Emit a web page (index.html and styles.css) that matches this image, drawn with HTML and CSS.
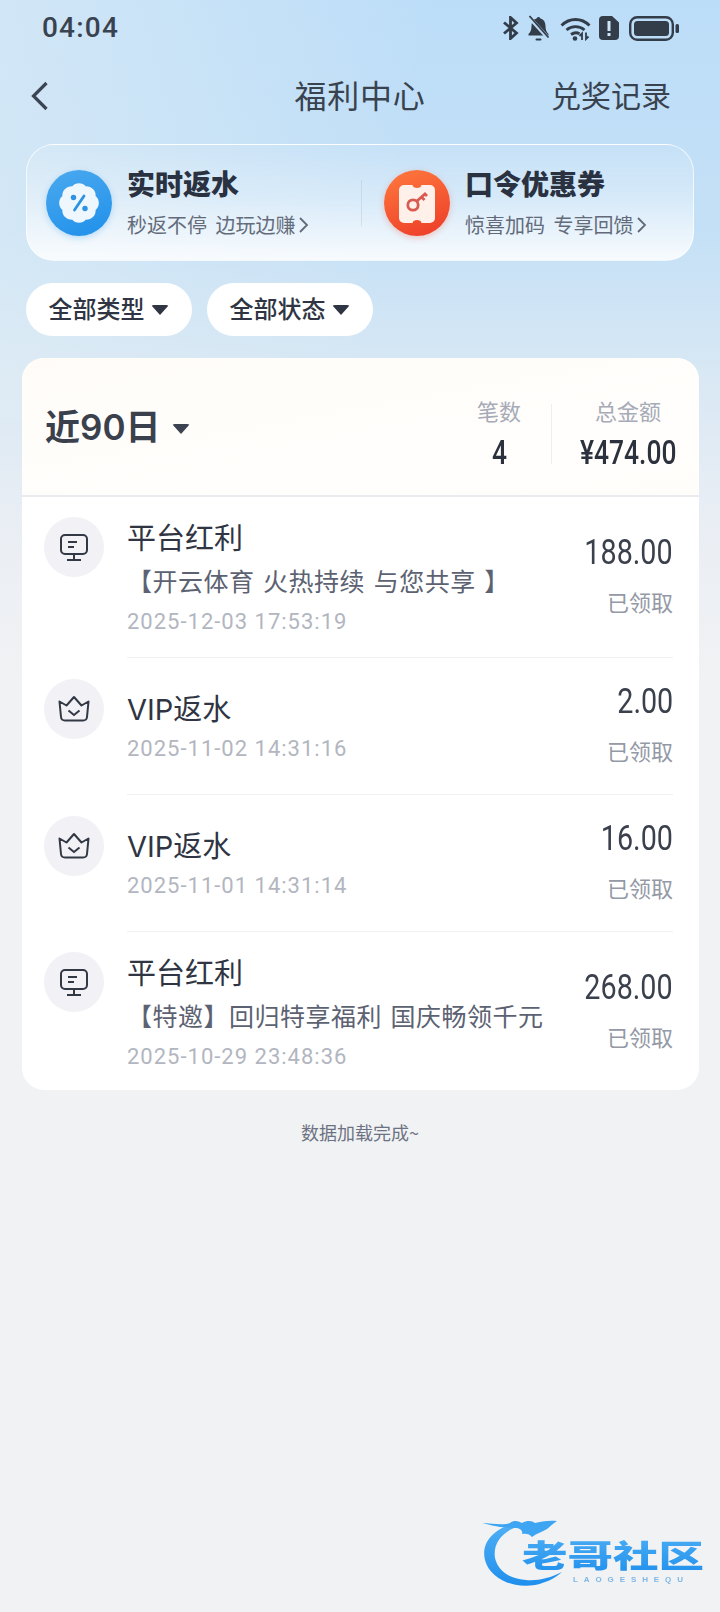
FILE: index.html
```html
<!DOCTYPE html>
<html lang="zh-CN">
<head>
<meta charset="utf-8">
<title>福利中心</title>
<link rel="stylesheet" href="styles.css">
</head>
<body>
<div class="page">
  <div class="status">
    <span class="time">04:04</span>
    <div class="status-icons">
      <svg class="si" width="17" height="24" viewBox="0 0 17 24"><path d="M2 6.500 14.500 17 8.500 22.500V1.500L14.500 7 2 17.500" fill="none" stroke="#333c49" stroke-width="2.800"/></svg>
      <svg class="si" width="23" height="27" viewBox="0 0 23 27"><path d="M11.500 2a2 2 0 0 1 2 1.500c3.500 1 5 3.800 5 7.500 0 4 1 6 3 8v1.500H1.500V19c2-2 3-4 3-8 0-3.700 1.500-6.500 5-7.500a2 2 0 0 1 2-1.500z" fill="#333c49"/><rect x="8.500" y="23.500" width="6" height="2" rx="1" fill="#333c49"/><path d="M1.500 1.500 21 23" stroke="#bcdcf6" stroke-width="4"/><path d="M2.500 1 21.500 22.500" stroke="#333c49" stroke-width="1.800"/></svg>
      <svg class="si wifi" width="31" height="25" viewBox="0 0 31 25"><path d="M1.500 9.500C9.500 1.500 21.500 1.500 29.500 9.500M6.500 14C11.500 9.500 19.500 9.500 24.500 14M11 18.500c2.800-2 6-2.200 8.500-.8" fill="none" stroke="#333c49" stroke-width="2.800"/><circle cx="15" cy="22.500" r="2.300" fill="#333c49"/><path d="M22 24v-6.500l-2.500 2.500M26 16.500V23l2.500-2.500" fill="none" stroke="#333c49" stroke-width="1.800"/></svg>
      <svg class="si" width="20" height="24" viewBox="0 0 20 24"><path d="M4 0h9l7 6.500V20a4 4 0 0 1-4 4H4a4 4 0 0 1-4-4V4a4 4 0 0 1 4-4z" fill="#333c49"/><rect x="8.500" y="5" width="3" height="10" fill="#cfe5f8"/><rect x="8.500" y="17" width="3" height="3" fill="#cfe5f8"/></svg>
      <svg class="si battery" width="50" height="25" viewBox="0 0 50 25"><rect x="1.200" y="1.200" width="42.600" height="22.600" rx="7" fill="none" stroke="#333c49" stroke-width="2.400"/><rect x="5" y="5" width="35" height="15" rx="3.500" fill="#333c49"/><rect x="46.500" y="8" width="3.500" height="9" rx="1.500" fill="#333c49"/></svg>
    </div>
  </div>

  <header class="nav">
    <svg class="back" width="20" height="32" viewBox="0 0 20 32"><path d="M16.500 3 3.500 16l13 13" fill="none" stroke="#3b4452" stroke-width="3.200"/></svg>
    <h1 class="nav-title">福利中心</h1>
    <a class="nav-link">兑奖记录</a>
  </header>

  <section class="banner">
    <div class="promo promo-a">
      <span class="promo-icon blue">
        <svg width="66" height="66" viewBox="0 0 66 66"><path d="M49.600 26.100A9 9 0 0 1 49.600 39.900 9 9 0 0 1 39.900 49.600 9 9 0 0 1 26.100 49.600 9 9 0 0 1 16.400 39.900 9 9 0 0 1 16.400 26.100 9 9 0 0 1 26.100 16.400 9 9 0 0 1 39.900 16.400 9 9 0 0 1 49.600 26.100z" fill="#eef7fe"/><circle cx="27.500" cy="27.500" r="2.700" fill="#2c92e3"/><circle cx="39" cy="38.500" r="2.700" fill="#2c92e3"/><path d="M38 26 28.500 40" stroke="#2c92e3" stroke-width="2.800" stroke-linecap="round"/></svg>
      </span>
      <div class="promo-text">
        <div class="promo-title">实时返水</div>
        <div class="promo-sub">秒返不停 边玩边赚<svg class="more" width="11" height="18" viewBox="0 0 11 18"><path d="M2 2l7 7-7 7" fill="none" stroke="#626a79" stroke-width="1.800"/></svg></div>
      </div>
    </div>
    <i class="promo-sep"></i>
    <div class="promo promo-b">
      <span class="promo-icon red">
        <svg width="66" height="66" viewBox="0 0 66 66"><path d="M20 15h8.500c.5 2.200 2 3 4.500 3s4-.8 4.500-3H46a5 5 0 0 1 5 5v28a5 5 0 0 1-5 5h-8.500c-.5-2.200-2-3-4.500-3s-4 .8-4.500 3H20a5 5 0 0 1-5-5V20a5 5 0 0 1 5-5z" fill="#fff1ea"/><circle cx="29" cy="35" r="5.200" fill="none" stroke="#d85a50" stroke-width="2.800"/><path d="M33 31 42 23M37.500 27l3 3M41 24l2 2" fill="none" stroke="#d85a50" stroke-width="2.800"/></svg>
      </span>
      <div class="promo-text">
        <div class="promo-title">口令优惠券</div>
        <div class="promo-sub">惊喜加码 专享回馈<svg class="more" width="11" height="18" viewBox="0 0 11 18"><path d="M2 2l7 7-7 7" fill="none" stroke="#626a79" stroke-width="1.800"/></svg></div>
      </div>
    </div>
  </section>

  <div class="filters">
    <button class="pill">全部类型<i class="caret"></i></button>
    <button class="pill">全部状态<i class="caret"></i></button>
  </div>

  <main class="card">
    <div class="summary">
      <div class="range">近90日<i class="caret big"></i></div>
      <div class="stats">
        <div class="stat stat-count"><span class="stat-label">笔数</span><span class="stat-num">4</span></div>
        <i class="stat-sep"></i>
        <div class="stat stat-total"><span class="stat-label">总金额</span><span class="stat-num">¥474.00</span></div>
      </div>
    </div>

    <div class="row tall">
      <span class="row-icon"><svg width="32" height="30" viewBox="0 0 32 30"><rect x="3" y="3" width="26" height="19" rx="4" fill="none" stroke="#323844" stroke-width="2"/><path d="M10 10h9M10 15h6M16 22v5M9 28h14" fill="none" stroke="#323844" stroke-width="2"/></svg></span>
      <div class="row-body">
        <div class="row-main">
          <div class="row-title">平台红利</div>
          <div class="row-sub">【开云体育 火热持续 与您共享 】</div>
          <div class="row-date">2025-12-03 17:53:19</div>
        </div>
        <div class="row-side"><div class="amount">188.00</div><div class="state">已领取</div></div>
      </div>
    </div>

    <div class="row">
      <span class="row-icon"><svg width="34" height="30" viewBox="0 0 34 30"><path d="M2.500 7.500 9.500 11.500 17 3l7.500 8.500 7-4-1.500 15.500a4 4 0 0 1-4 3.500H8a4 4 0 0 1-4-3.500z" fill="none" stroke="#323844" stroke-width="2" stroke-linejoin="round"/><path d="M11.500 16.500l5.500 4.500 5.500-4.500" fill="none" stroke="#323844" stroke-width="2"/></svg></span>
      <div class="row-body">
        <div class="row-main">
          <div class="row-title">VIP返水</div>
          <div class="row-date">2025-11-02 14:31:16</div>
        </div>
        <div class="row-side"><div class="amount">2.00</div><div class="state">已领取</div></div>
      </div>
    </div>

    <div class="row">
      <span class="row-icon"><svg width="34" height="30" viewBox="0 0 34 30"><path d="M2.500 7.500 9.500 11.500 17 3l7.500 8.500 7-4-1.500 15.500a4 4 0 0 1-4 3.500H8a4 4 0 0 1-4-3.500z" fill="none" stroke="#323844" stroke-width="2" stroke-linejoin="round"/><path d="M11.500 16.500l5.500 4.500 5.500-4.500" fill="none" stroke="#323844" stroke-width="2"/></svg></span>
      <div class="row-body">
        <div class="row-main">
          <div class="row-title">VIP返水</div>
          <div class="row-date">2025-11-01 14:31:14</div>
        </div>
        <div class="row-side"><div class="amount">16.00</div><div class="state">已领取</div></div>
      </div>
    </div>

    <div class="row tall">
      <span class="row-icon"><svg width="32" height="30" viewBox="0 0 32 30"><rect x="3" y="3" width="26" height="19" rx="4" fill="none" stroke="#323844" stroke-width="2"/><path d="M10 10h9M10 15h6M16 22v5M9 28h14" fill="none" stroke="#323844" stroke-width="2"/></svg></span>
      <div class="row-body last">
        <div class="row-main">
          <div class="row-title">平台红利</div>
          <div class="row-sub">【特邀】回归特享福利 国庆畅领千元</div>
          <div class="row-date">2025-10-29 23:48:36</div>
        </div>
        <div class="row-side"><div class="amount">268.00</div><div class="state">已领取</div></div>
      </div>
    </div>
  </main>

  <p class="done">数据加载完成~</p>

  <svg class="logo" width="240" height="80" viewBox="0 0 240 80">
    <defs><linearGradient id="lg" x1="0" y1="0" x2="0" y2="1"><stop offset="0" stop-color="#4fb0f5"/><stop offset="1" stop-color="#1f8fec"/></linearGradient></defs>
    <path d="M32 12C12 18 1 32 5 48c4 17 26 29 50 25 10-2 19-6 27-13-12 6-24 9-36 8-16-1-28-9-31-22C13 33 20 22 34 16z" fill="url(#lg)"/>
    <path d="M2 11c10 0 20 3 28 0 4-3 8-2 12 0 6-3 10-2 13 0 6-1 12-3 22-2-5 3-7 6-10 8-5 3-10 4-15 8-2-3-6-4-10-3 1-3-1-5-5-6-8 0-16 0-35-5z" fill="#3da5f2"/>
    <text class="logo-cn" x="42" y="55" textLength="182" lengthAdjust="spacingAndGlyphs" fill="url(#lg)">老哥社区</text>
    <text class="logo-en" x="93" y="70" textLength="110" fill="#7fb6e6">LAOGESHEQU</text>
  </svg>
</div>
</body>
</html>
```
FILE: styles.css
```css
* { box-sizing: border-box; }
html, body { margin: 0; padding: 0; }
body { font-family: "Noto Sans CJK SC", "Noto Sans", sans-serif; color: #2f3542; }
.page {
  position: relative;
  width: 720px;
  height: 1612px;
  overflow: hidden;
  background:
    linear-gradient(100deg, rgba(226,238,245,.55) 0%, rgba(226,238,245,0) 55%) 0 0 / 100% 420px no-repeat,
    linear-gradient(180deg, #bcddf8 0%, #c4e0f6 230px, #d9e8f4 380px, #e9eef4 520px, #f1f2f4 680px);
}
.status { height: 56px; padding: 0 41px 0 42px; display: flex; justify-content: space-between; align-items: center; }
.time { font: 500 28px/1 Roboto, sans-serif; letter-spacing: 1.200px; color: #39424f; }
.status-icons { display: flex; align-items: center; gap: 8px; }
.si { display: block; }
.wifi, .battery { margin-left: 2px; }

.nav { height: 80px; position: relative; display: flex; align-items: center; justify-content: space-between; padding: 0 49px 0 30px; }
.back { display: block; }
.nav-title { position: absolute; left: 0; right: 0; top: 0; margin: 0; text-align: center; font-size: 32px; line-height: 76px; font-weight: 400; color: #39424f; letter-spacing: .8px; pointer-events: none; }
.nav-link { font-size: 30px; line-height: 76px; margin-top: -4px; color: #39424f; }

.banner {
  margin: 8px 26px 0;
  height: 117px;
  border-radius: 28px;
  border: 1px solid rgba(255,255,255,.7);
  background: linear-gradient(180deg, rgba(255,255,255,.08) 0%, rgba(255,255,255,.32) 45%, rgba(255,255,255,.85) 100%);
  display: flex;
  align-items: center;
}
.promo { display: flex; align-items: center; gap: 15px; }
.promo-a { width: 334px; padding-left: 19px; }
.promo-b { padding-left: 22px; }
.promo-icon { width: 66px; height: 66px; border-radius: 50%; display: block; }
.promo-icon svg { display: block; }
.blue { background: linear-gradient(160deg, #4ba9ef, #1f90ea); box-shadow: 0 2px 6px rgba(60,160,240,.3); }
.red { background: linear-gradient(160deg, #ff7a3e, #ec3a28); box-shadow: 0 2px 6px rgba(240,90,60,.3); }
.promo-text { display: flex; flex-direction: column; margin-bottom: 2px; }
.promo-title { font-size: 28px; line-height: 36px; font-weight: 900; color: #2a3140; }
.promo-sub { font-size: 20px; line-height: 28px; margin-top: 10px; color: #636b7a; display: flex; align-items: center; word-spacing: 4px; white-space: pre; }
.more { margin-left: 3px; display: block; }
.promo-sep { width: 1px; height: 46px; background: rgba(170,190,205,.35); }

.filters { display: flex; gap: 15px; margin: 22px 26px 0; }
.pill { height: 53px; width: 166px; border: 0; border-radius: 27px; background: #fff; font: 500 24px/1 "Noto Sans CJK SC", sans-serif; color: #2f3542; display: flex; align-items: center; justify-content: center; gap: 6px; padding: 0 1px 4px 0; }
.caret { display: block; width: 0; height: 0; margin-top: 4px; border-left: 9px solid transparent; border-right: 9px solid transparent; border-top: 10px solid #2f3542; border-radius: 3px; }
.caret.big { margin-left: 12px; border-top-color: #3b4250; }

.card { margin: 22px 21px 0 22px; height: 732px; background: #fff; border-radius: 22px; overflow: hidden; }
.summary { height: 139px; padding: 0 23px; display: flex; justify-content: space-between; align-items: center; background: linear-gradient(170deg, #fffcf8, #fffefc 70%, #fffdfa); border-bottom: 2px solid #e9ebef; }
.range { font: 600 35px/44px Inter, "Noto Sans CJK SC", sans-serif; color: #3a404c; display: flex; align-items: center; margin-top: 0; }
.stats { display: flex; align-items: center; margin-top: 15px; }
.stat { display: flex; flex-direction: column; align-items: center; }
.stat-count { width: 90px; }
.stat-total { width: 96px; }
.stat-sep { width: 1px; height: 60px; background: #eceef1; margin: 0 28px 0 7px; }
.stat-label { font-size: 22px; line-height: 30px; color: #a6abb7; white-space: nowrap; }
.stat-num { font: 500 33px/40px Roboto, sans-serif; color: #2b313d; margin-top: 8px; white-space: nowrap; transform: scaleX(.8); }

.row { display: flex; gap: 23px; padding: 0 26px 0 22px; }
.row-icon { width: 60px; height: 60px; border-radius: 50%; background: #f1f1f6; margin-top: 21px; flex: none; display: flex; align-items: center; justify-content: center; }
.tall .row-icon { margin-top: 20px; }
.row-icon svg { display: block; }
.row-body { flex: 1; min-width: 0; min-height: 137px; padding: 23px 0 20px; display: flex; justify-content: space-between; align-items: center; border-bottom: 1px solid #f0f1f3; }
.row-body.last { border-bottom: 0; }
.row-main { min-width: 0; }
.row-title { font: 400 29px/38px Inter, "Noto Sans CJK SC", sans-serif; color: #2f3542; }
.row-sub { font-size: 25px; line-height: 34px; margin-top: 5px; color: #5c6272; white-space: nowrap; letter-spacing: .5px; word-spacing: 2.500px; }
.row-date { font: 400 22px/30px Roboto, sans-serif; letter-spacing: 1px; color: #b2b6bf; margin-top: 5px; }
.row-sub + .row-date { margin-top: 10px; }
.row-side { text-align: right; flex: none; margin-top: -8px; }
.amount { font: 400 35px/40px Roboto, sans-serif; color: #3a404c; transform: scaleX(.82); transform-origin: right center; }
.state { font-size: 22px; line-height: 30px; margin-top: 13px; color: #9499a6; }

.done { margin: 30px 0 0; text-align: center; font-size: 18px; line-height: 24px; color: #6d7282; }
.logo { position: absolute; left: 480px; top: 1512px; filter: blur(.6px); }
.logo-cn { font-size: 31px; font-weight: 900; font-family: "Noto Sans CJK SC", sans-serif; }
.logo-en { font: 700 8px "Liberation Sans", sans-serif; }
```
